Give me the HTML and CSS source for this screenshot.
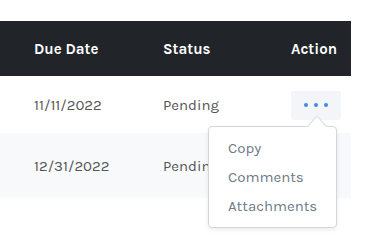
FILE: index.html
```html
<!DOCTYPE html>
<html>
<head>
<meta charset="utf-8">
<link rel="stylesheet" href="styles.css">
</head>
<body>
<div class="page">
<div class="table">
  <div class="row head">
    <div class="cell c1">Due Date</div>
    <div class="cell c2">Status</div>
    <div class="cell c3">Action</div>
  </div>
  <div class="row r1">
    <div class="cell c1">11/11/2022</div>
    <div class="cell c2">Pending</div>
    <div class="cell c3">
      <div class="actions">
        <button class="dots"><span></span><span></span><span></span></button>
        <div class="menu">
          <div class="item">Copy</div>
          <div class="item">Comments</div>
          <div class="item">Attachments</div>
        </div>
      </div>
    </div>
  </div>
  <div class="row r2">
    <div class="cell c1">12/31/2022</div>
    <div class="cell c2">Pending</div>
    <div class="cell c3"></div>
  </div>
</div>
</div>
</body>
</html>
```
FILE: styles.css
```css
html, body { margin: 0; padding: 0; background: #fff; }
body { font-family: "Karla", "Inter", "Liberation Sans", sans-serif; font-size: 15px; }
.page { min-height: 247px; padding-top: 21px; box-sizing: border-box; }
.table { width: 351px; }
.row { display: grid; grid-template-columns: 163px 128px 1fr; align-items: center; }
.cell { box-sizing: border-box; }
.c1 { padding-left: 34px; }
.head { height: 55px; background: #212529; color: #fff; font-weight: 700; }
.r1 { height: 57px; background: #fff; color: #555; }
.r2 { height: 65px; background: #f8f9fa; color: #555; }
.actions { position: relative; width: 50px; }
.dots {
  display: flex; gap: 6px; align-items: center; justify-content: center;
  width: 50px; height: 29px; border: 0; border-radius: 3px; padding: 0;
  background: #f3f5f8; margin-top: 1px;
}
.dots span { width: 4px; height: 4px; border-radius: 50%; background: #3f8ae8; }
.menu {
  position: absolute; left: -83px; top: 35px; width: 129px; box-sizing: border-box;
  background: #fff; border: 1px solid #d3d6da; border-radius: 4px;
  box-shadow: 0 2px 4px rgba(0,0,0,0.08);
  padding: 7px 0 6px; z-index: 2;
}
.menu::before {
  content: ""; position: absolute; left: 97px; top: -12px;
  border-left: 11px solid transparent; border-right: 11px solid transparent;
  border-bottom: 12px solid #e2e5e8;
}
.menu::after {
  content: ""; position: absolute; left: 99px; top: -10px;
  border-left: 9px solid transparent; border-right: 9px solid transparent;
  border-bottom: 10px solid #fff;
}
.item { height: 29px; line-height: 29px; padding-left: 19px; color: #6e7a88; }
```
